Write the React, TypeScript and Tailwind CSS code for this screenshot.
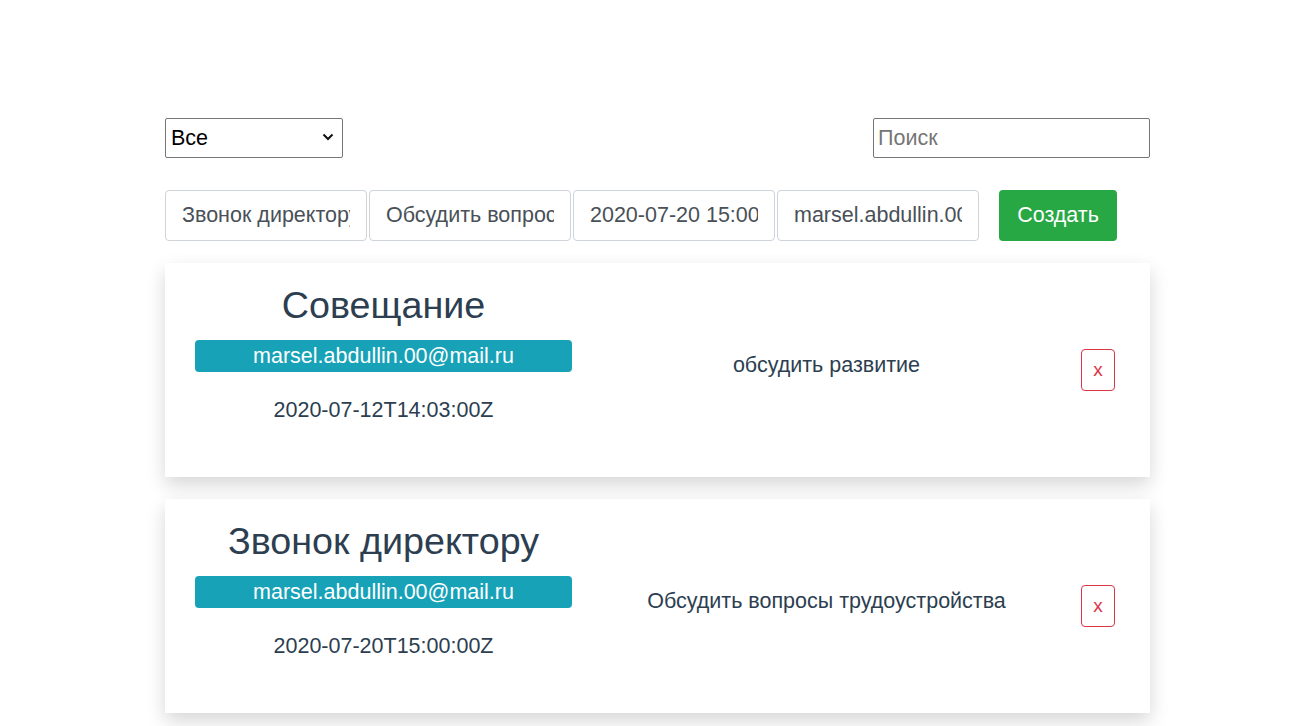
import React from 'react';

const EVENTS = [
  {
    title: 'Совещание',
    email: 'marsel.abdullin.00@mail.ru',
    date: '2020-07-12T14:03:00Z',
    text: 'обсудить развитие',
  },
  {
    title: 'Звонок директору',
    email: 'marsel.abdullin.00@mail.ru',
    date: '2020-07-20T15:00:00Z',
    text: 'Обсудить вопросы трудоустройства',
  },
];

const FIELDS = ['Звонок директору', 'Обсудить вопросы трудоустройства', '2020-07-20 15:00:00', 'marsel.abdullin.00@mail.ru'];

const App: React.FC = () => {
  return (
    <div className="min-h-screen bg-white font-['Liberation_Sans',Arial,sans-serif]">
      <div className="ml-[165px] w-[985px] pt-[118px]">
        {/* Filter + search */}
        <div className="flex items-center justify-between">
          <div className="relative h-[40px] w-[178px]">
            <select
              defaultValue="all"
              className="h-full w-full appearance-none rounded-[2px] border border-[#767676] bg-white pl-[5px] text-[21.5px] text-black outline-none"
            >
              <option value="all">Все</option>
            </select>
            <svg
              className="pointer-events-none absolute right-[9px] top-[15px]"
              width="12"
              height="8"
              viewBox="0 0 12 8"
            >
              <path d="M1.5 1.5 L6 6 L10.5 1.5" fill="none" stroke="#111" strokeWidth="2" />
            </svg>
          </div>
          <input
            placeholder="Поиск"
            className="h-[40px] w-[277px] border border-[#767676] px-[4px] text-[21.5px] text-black placeholder:text-[#757575] rounded-[2px] outline-none"
          />
        </div>

        {/* Create form */}
        <div className="mt-[32px] flex items-center">
          <div className="flex gap-[2px]">
            {FIELDS.map((v, i) => (
              <input
                key={i}
                readOnly
                defaultValue={v}
                className="h-[51px] w-[202px] rounded-[4px] border border-[#ced4da] bg-white px-[16px] text-[21.5px] text-[#495057] outline-none"
              />
            ))}
          </div>
          <button className="ml-[20px] h-[51px] w-[118px] rounded-[4px] bg-[#28a745] text-[21.5px] text-white">
            Создать
          </button>
        </div>

        {/* Event cards */}
        <div className="mt-[22px] flex flex-col gap-[22px] pb-[30px]">
          {EVENTS.map((ev, i) => (
            <div
              key={i}
              className="flex h-[214px] items-start bg-white px-[30px] shadow-[0_8px_18px_rgba(0,0,0,0.16)]"
            >
              <div className="flex w-[377px] flex-col items-center pt-[21px] text-[#2c3e50]">
                <h2 className="text-[37.7px] leading-[43px]">{ev.title}</h2>
                <div className="mt-[13px] flex h-[32px] w-full items-center justify-center rounded-[4px] bg-[#17a2b8] text-[21.5px] text-white">
                  {ev.email}
                </div>
                <div className="mt-[26px] text-[21.5px] leading-[24px]">{ev.date}</div>
              </div>
              <div className="mt-[90px] flex-1 text-center text-[21.5px] leading-[24px] text-[#2c3e50]">
                {ev.text}
              </div>
              <button className="mt-[86px] mr-[5px] h-[42px] w-[34px] rounded-[4px] border border-[#dc3545] text-[19px] text-[#dc3545]">
                x
              </button>
            </div>
          ))}
        </div>
      </div>
    </div>
  );
};

export default App;
